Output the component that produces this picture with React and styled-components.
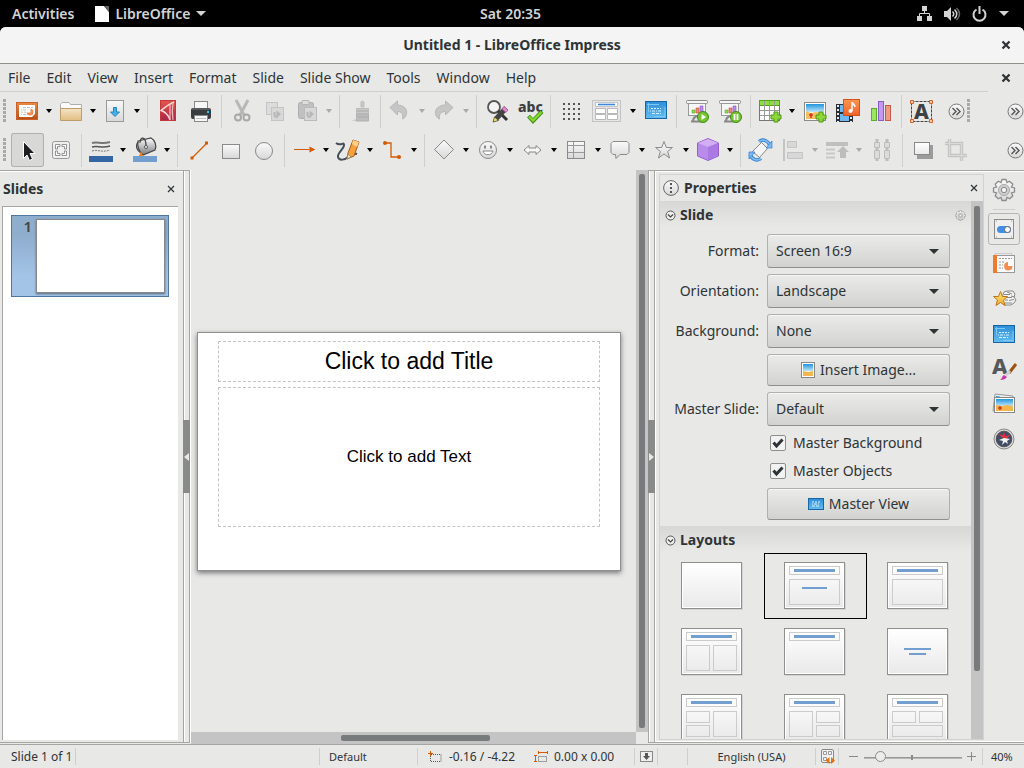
import React from 'react';
import styled, { createGlobalStyle, css } from 'styled-components';

const Global = createGlobalStyle`
  *, *::before, *::after { box-sizing: border-box; }
  body {
    margin: 0;
    background: #000;
    color: #2e3436;
    font: 14px/20px "Noto Sans", "Open Sans", sans-serif;
  }
  button, select, input { font: inherit; color: inherit; margin: 0; }
`;

/* ---------- frame ---------- */

const Screen = styled.div`
  display: flex;
  flex-direction: column;
  height: 100vh;
  min-height: 480px;
  overflow: hidden;
`;

const TopBar = styled.header`
  display: grid;
  grid-template-columns: 1fr auto 1fr;
  align-items: center;
  height: 27px;
  padding: 0 15px 0 12px;
  color: #d3d3d3;
  font-weight: 600;
`;

const TopGroup = styled.div`
  display: flex;
  align-items: center;
  gap: ${(p) => p.$gap}px;
  justify-content: ${(p) => (p.$end ? 'flex-end' : 'flex-start')};
`;

const TopButton = styled.button`
  display: flex;
  align-items: center;
  gap: 6px;
  padding: 0;
  border: 0;
  background: none;
`;

const Window = styled.div`
  display: flex;
  flex: 1;
  flex-direction: column;
  min-height: 0;
  background: #e8e8e7;
  border-radius: 6px 6px 0 0;
`;

const TitleBar = styled.div`
  display: grid;
  grid-template-columns: 1fr auto 1fr;
  align-items: center;
  height: 37px;
  padding: 0 12px;
  background: #f4f4f4;
  border-bottom: 1px solid #8f908c;
  border-radius: 6px 6px 0 0;
`;

const Title = styled.h1`
  grid-column: 2;
  margin: 0;
  font-size: 14px;
  font-weight: 700;
`;

const CloseButton = styled.button`
  display: flex;
  align-items: center;
  justify-content: center;
  justify-self: end;
  width: 12px;
  height: 20px;
  margin-left: auto;
  padding: 0;
  border: 0;
  background: none;
`;

const MenuBar = styled.nav`
  display: flex;
  align-items: center;
  gap: 16px;
  height: 27px;
  padding: 0 12px 0 8px;
`;

const MenuItem = styled.button`
  padding: 0;
  border: 0;
  background: none;
`;

/* ---------- toolbars ---------- */

const Toolbar = styled.div`
  display: flex;
  align-items: center;
  height: 39px;
  padding: 0 0 1px 3px;
`;

const ToolbarLine = styled.div`
  height: 1px;
  margin-right: 36px;
  background: #cfcfce;
`;

const Grip = styled.span`
  width: 3px;
  height: 24px;
  margin-right: ${(p) => p.$gap || 0}px;
  background: repeating-linear-gradient(#a9a9a8 0 3px, transparent 3px 4px);
`;

const ToolButton = styled.button`
  display: flex;
  align-items: center;
  flex: none;
  width: ${(p) => (p.$wide ? 41 : 33)}px;
  height: 34px;
  padding: 0 4px;
  border: 0;
  border-radius: 3px;
  background: none;
  ${(p) =>
    p.$active &&
    css`
      background: #d8d8d7;
      box-shadow: inset 0 0 0 1px #b0b0ae;
    `}
`;

const DropButton = styled.button`
  display: flex;
  align-items: center;
  flex: none;
  width: 11px;
  height: 34px;
  padding: 0 2px;
  border: 0;
  background: none;
`;

const Separator = styled.span`
  flex: none;
  width: 8px;
  height: 33px;
  background: linear-gradient(#cfcfce, #cfcfce) 4px 0 / 1px 100% no-repeat;
`;

const MoreButton = styled.button`
  display: flex;
  padding: 0;
  margin-left: ${(p) => (p.$end ? 'auto' : '10px')};
  margin-right: ${(p) => (p.$end ? 0 : '2px')};
  border: 0;
  background: none;
`;

/* ---------- workspace ---------- */

const Workspace = styled.main`
  display: flex;
  flex: 1;
  min-height: 0;
`;

const SlidePane = styled.aside`
  display: flex;
  flex: none;
  flex-direction: column;
  width: 183px;
  border-top: 1px solid #a5a6a3;
  border-bottom: 1px solid #a5a6a3;
  box-shadow: inset 0 1px #fff;
  margin-bottom: 1px;
`;

const PaneHeader = styled.div`
  display: flex;
  align-items: center;
  height: 35px;
  padding: 0 6px 0 3px;
`;

const PaneTitle = styled.h2`
  margin: 0;
  font-size: 14px;
  font-weight: 700;
`;

const SlideList = styled.div`
  flex: 1;
  margin: 0 5px 2px 2px;
  padding: 8px 9px 8px 8px;
  border-left: 1px solid #a5a6a3;
  border-top: 1px solid #a5a6a3;
  background: #fff;
`;

const SlideItem = styled.button`
  display: flex;
  align-items: flex-start;
  gap: 4px;
  width: 100%;
  height: 82px;
  padding: 3px;
  border: 1px solid #52779f;
  background: linear-gradient(#8fadcd 25%, #a3c4e6 75%);
  font-size: 15px;
  line-height: 14px;
  font-weight: 600;
`;

const SlideNumber = styled.span`
  flex: 1;
  text-align: right;
  color: #444;
`;

const SlideThumb = styled.span`
  width: 129px;
  height: 74px;
  border: 1px solid #888;
  background: #fff;
  box-shadow: 0 1px 2px #55667a;
`;

const Splitter = styled.div`
  display: flex;
  flex: none;
  align-items: center;
  width: 7px;
  border: 1px solid #a5a6a3;
  box-shadow: inset 1px 0 #fff, 1px 0 #fff;
  margin-bottom: 1px;
`;

const SplitHandle = styled.button`
  display: flex;
  flex: none;
  align-items: center;
  justify-content: center;
  width: 7px;
  height: 73px;
  margin: 0 -1px;
  padding: 0;
  border: 0;
  background: #888b8a;
`;

const Editor = styled.section`
  display: flex;
  flex: 1;
  min-width: 0;
  padding-left: 1px;
`;

const CanvasColumn = styled.div`
  display: flex;
  flex: 1;
  flex-direction: column;
  min-width: 0;
`;

const Canvas = styled.div`
  display: flex;
  flex: 1;
  align-items: center;
  justify-content: center;
  min-height: 0;
  padding: 0 9px 0 0;
  overflow: hidden;
`;

const Page = styled.article`
  display: flex;
  flex: none;
  flex-direction: column;
  gap: 5px;
  width: 424px;
  height: 239px;
  padding: 8px 20px;
  border: 1px solid #8f9092;
  background: #fff;
  box-shadow: 0 2px 5px #777;
`;

const Placeholder = styled.div`
  display: flex;
  align-items: center;
  justify-content: center;
  height: ${(p) => p.$height}px;
  border: 1px dashed #c4c4c4;
  color: #000;
  font-family: "Liberation Sans", Arial, sans-serif;
  font-size: ${(p) => p.$size}px;
`;

const VScroll = styled.div`
  flex: none;
  width: 12px;
  margin-bottom: ${(p) => p.$bottom || 0}px;
  padding: ${(p) => p.$pad} 3px;
  background: #c3c4c3;
`;

const HScroll = styled.div`
  display: flex;
  justify-content: center;
  flex: none;
  height: 12px;
  padding: 3px 0 3px 4px;
  background: #c3c4c3;
`;

const ScrollThumb = styled.div`
  width: ${(p) => p.$width || '100%'};
  height: ${(p) => p.$height || '100%'};
  border-radius: 2px;
  background: #777b7b;
`;

/* ---------- sidebar ---------- */

const Sidebar = styled.aside`
  display: flex;
  flex: none;
  width: 369px;
  padding: 3px 0 2px 4px;
  border-top: 1px solid #a5a6a3;
  border-bottom: 1px solid #a5a6a3;
  box-shadow: inset 0 1px #fff, inset 0 -1px #fff;
  margin-bottom: 1px;
`;

const Deck = styled.div`
  display: flex;
  flex: 1;
  flex-direction: column;
  min-width: 0;
  border: 1px solid #d2d3d1;
`;

const DeckHeader = styled.div`
  display: flex;
  align-items: center;
  gap: 5px;
  height: 26px;
  padding: 0 3px;
`;

const DeckBody = styled.div`
  display: flex;
  flex: 1;
  min-height: 0;
`;

const DeckContent = styled.div`
  flex: 1;
  min-width: 0;
  overflow: hidden;
`;

const SectionHeader = styled.div`
  display: flex;
  align-items: center;
  gap: 4px;
  height: 26px;
  padding: 2px 5px 0;
  background: linear-gradient(#d7d7d6, #e8e8e7);
`;

const IconButton = styled.button`
  display: flex;
  padding: 0;
  border: 0;
  background: none;
  margin-left: ${(p) => (p.$end ? 'auto' : 0)};
`;

const Form = styled.form`
  display: grid;
  grid-template-columns: 1fr 183px;
  align-items: center;
  gap: 6px 8px;
  padding: 7px 21px 6px 0;
`;

const Label = styled.label`
  text-align: right;
`;

const raised = css`
  border: 1px solid #b0b1ae;
  border-bottom-color: #8f908e;
  border-radius: 3px;
  background: linear-gradient(#ebebea, #d2d2d1);
  box-shadow: inset 0 1px #f6f6f6;
`;

const SelectBox = styled.div`
  display: grid;
  align-items: center;
  height: 34px;
  ${raised}
  > * { grid-area: 1 / 1; }
  > svg { justify-self: end; margin-right: 10px; pointer-events: none; }
`;

const Select = styled.select`
  width: 100%;
  height: 100%;
  padding: 0 28px 0 8px;
  border: 0;
  background: none;
  appearance: none;
`;

const PushButton = styled.button`
  grid-column: 2;
  display: flex;
  align-items: center;
  justify-content: center;
  gap: 5px;
  height: 32px;
  ${raised}
`;

const CheckGroup = styled.div`
  grid-column: 2;
  display: grid;
  gap: 6px;
  padding-left: 3px;
`;

const CheckLabel = styled.label`
  display: flex;
  align-items: center;
  gap: 7px;
  height: 22px;
`;

const checkMark =
  "url(\"data:image/svg+xml,%3Csvg xmlns='http://www.w3.org/2000/svg' viewBox='0 0 14 14'%3E%3Cpath d='M2.500 6.500L5.500 10L11.500 3.500' fill='none' stroke='%232e3436' stroke-width='3'/%3E%3C/svg%3E\")";

const Check = styled.input`
  width: 16px;
  height: 16px;
  border: 1px solid #8f908e;
  border-radius: 2px;
  background: ${checkMark} center / 14px no-repeat, #f2f2f2;
  appearance: none;
`;

const LayoutGrid = styled.div`
  display: grid;
  grid-template-columns: repeat(3, 1fr);
  grid-auto-rows: 66px;
  padding: 1px 1px 0;
`;

const LayoutCell = styled.button`
  display: flex;
  align-items: center;
  justify-content: center;
  padding: 0 2px 1px 0;
  border: 1px solid ${(p) => (p.$selected ? '#000' : 'transparent')};
  background: none;
`;

const TabBar = styled.nav`
  display: flex;
  flex: none;
  flex-direction: column;
  align-items: center;
  width: 40px;
  gap: 3px;
`;

const TabButton = styled.button`
  display: flex;
  align-items: center;
  justify-content: center;
  width: 32px;
  height: 32px;
  padding: 0;
  border: 1px solid ${(p) => (p.$active ? '#b5b6b4' : 'transparent')};
  border-radius: 3px;
  background: none;
`;

const TabRule = styled.span`
  width: 22px;
  height: 1px;
  background: #cfcfce;
`;

/* ---------- status bar ---------- */

const StatusBar = styled.footer`
  display: flex;
  align-items: center;
  height: 24px;
  border-top: 1px solid #a5a6a3;
  font-size: 11px;
`;

const StatusCell = styled.div`
  display: flex;
  align-items: center;
  flex: ${(p) => (p.$grow ? '1' : 'none')};
  width: ${(p) => p.$width}px;
  height: 17px;
  justify-content: ${(p) => (p.$center ? 'center' : 'flex-start')};
  gap: 5px;
  padding-left: ${(p) => p.$pad || 0}px;
  border-right: ${(p) => (p.$last ? '0' : '1px solid #cfcfce')};
  white-space: nowrap;
`;

const StatusValue = styled.span`
  width: ${(p) => p.$width || 'auto'};
  font-size: 12px;
`;

const ZoomStep = styled.button`
  display: flex;
  padding: 0;
  border: 0;
  background: none;
`;

const ZoomSlider = styled.input`
  width: 98px;
  height: 16px;
  appearance: none;
  background:
    linear-gradient(#8b8c8a, #8b8c8a) 47px 6px / 2px 5px no-repeat,
    linear-gradient(#979896, #979896) 0 8px / 100% 1px no-repeat,
    linear-gradient(#b9bab8, #b9bab8) 0 9px / 100% 1px no-repeat;
  &::-webkit-slider-thumb {
    appearance: none;
    width: 11px;
    height: 11px;
    border: 1px solid #8b8c8a;
    border-radius: 50%;
    background: #ececeb;
  }
`;

/* ---------- icons ---------- */

const Svg = styled.svg`
  display: block;
  flex: none;
  overflow: visible;
`;

const Icon = ({ w = 24, h = 24, children }) => (
  <Svg width={w} height={h} viewBox={`0 0 ${w} ${h}`} fill="none" aria-hidden="true">
    {children}
  </Svg>
);

const Gradient = ({ id, from, to }) => (
  <linearGradient id={id} x1="0" y1="0" x2="0" y2="1">
    <stop offset="0" stopColor={from} />
    <stop offset="1" stopColor={to} />
  </linearGradient>
);

const HiddenSvg = styled.svg`
  position: absolute;
`;

const SharedDefs = () => (
  <HiddenSvg width="0" height="0" aria-hidden="true">
    <defs>
      <Gradient id="grey" from="#fafafa" to="#d8d8d8" />
      <Gradient id="orange" from="#ec8a45" to="#b84d12" />
      <Gradient id="blue" from="#2d8ed8" to="#63bdf0" />
      <Gradient id="sky" from="#2196dd" to="#bfe6fa" />
      <Gradient id="paper" from="#ffffff" to="#e9e9e9" />
      <Gradient id="wood" from="#f4e3c4" to="#e2bd83" />
      <Gradient id="red" from="#e5564a" to="#a52848" />
      <Gradient id="metal" from="#ffffff" to="#777b80" />
      <Gradient id="gold" from="#ffe77a" to="#f3a92a" />
      <Gradient id="film" from="#ff9450" to="#f1602a" />
    </defs>
  </HiddenSvg>
);

const Arrow = ({ color = '#000', w = 6 }) => (
  <Icon w={w} h={w === 6 ? 4 : 5}>
    <path d={w === 6 ? 'M0 0h6L3 4z' : 'M0 0h10L5 5z'} fill={color} />
  </Icon>
);

const Cross = ({ bold }) =>
  bold ? (
    <Icon w={8} h={8}>
      <path d="M.5 .5l7 7M7.500 .5l-7 7" stroke="#2e3436" strokeWidth="2.300" />
    </Icon>
  ) : (
    <Icon w={6} h={6}>
      <path d="M0 0l6 6M6 0L0 6" stroke="#2e3436" strokeWidth="1.200" />
    </Icon>
  );

const More = () => (
  <Icon w={17} h={17}>
    <circle cx="8.500" cy="8.500" r="7.500" fill="url(#grey)" stroke="#777" />
    <path d="M4.500 5l3.500 3.500L4.500 12M8.500 5L12 8.500 8.500 12" stroke="#555" strokeWidth="1.400" />
  </Icon>
);

const SmallPlus = ({ x, y }) => (
  <path
    d={`M${x + 3} ${y}h4v3h3v4h-3v3h-4v-3h-3v-4h3z`}
    fill="#8fd63a"
    stroke="#4b9a12"
    strokeWidth="1"
  />
);

const Bars = ({ children }) => (
  <>
    <rect x="2.500" y="1.500" width="21" height="3" rx="1" fill="#f5f5f5" stroke="#888" />
    <rect x="4.500" y="4.500" width="17" height="12" fill="#f6f6f6" stroke="#999" />
    <path d="M8 14V11h3v3z" fill="#8bdc52" stroke="#57ac25" strokeWidth=".6" />
    <path d="M12 14V9h3v5z" fill="#ee8877" stroke="#c44b3a" strokeWidth=".6" />
    <path d="M16 14V7h3v7z" fill="#b98bea" stroke="#8654c0" strokeWidth=".6" />
    <path d="M9 22c0-4 2-4 4-5M7 22.500h10" stroke="#888" strokeWidth="2" />
    {children}
  </>
);

const A = {
  impress: (
    <>
      <rect x="1.500" y="3.500" width="21" height="17" fill="url(#orange)" stroke="#c9622a" />
      <path d="M4 6h16v9l-3 3H4z" fill="#fff" />
      <path d="M8 8.500h10" stroke="#c4c4c4" strokeDasharray="3 1" />
      <path d="M6 11h5M6 15.500h5" stroke="#c4c4c4" strokeDasharray="1 1 3 1" />
      <path d="M6 13.200h5" stroke="#c4c4c4" strokeDasharray="2 1" />
      <path d="M15.500 9.500a3.500 3.500 0 1 1-4 4h4z" fill="#f28d52" />
    </>
  ),
  folder: (
    <>
      <path d="M1.500 21V5.500L3 3.500h7l1.500 2h11V21z" fill="url(#paper)" stroke="#b0aea8" />
      <path d="M1.500 9.500h21v12h-21z" fill="url(#wood)" stroke="#bd9d6b" />
    </>
  ),
  save: (
    <>
      <rect x="3.500" y="1.500" width="17" height="21" fill="url(#grey)" stroke="#999" />
      <path d="M10.500 8.500h3v4.500h3L12 17.500 7.500 13h3z" fill="#43b1ea" stroke="#2384bb" />
    </>
  ),
  pdf: (
    <>
      <rect x="5.500" y="1.500" width="15" height="20" fill="url(#red)" stroke="#c3363c" />
      <path d="M19 3C12 6 8 10 6 11.500c4 1 8 5 9 9.500" stroke="#f9d9d9" strokeWidth="1.500" />
      <path d="M15 5v16M18 4c-1 6-1 11 0 17" stroke="#f3b9bd" strokeWidth="1.200" />
    </>
  ),
  print: (
    <>
      <rect x="6.500" y="2.500" width="13" height="8" fill="#f7f7f7" stroke="#888" />
      <rect x="3" y="9" width="20" height="11" rx="2" fill="#3a3d40" />
      <path d="M4 10h18" stroke="#777" />
      <rect x="19" y="12" width="2" height="2" fill="#27c5f5" />
      <rect x="6.500" y="16.500" width="13" height="6" fill="#f7f7f7" stroke="#888" />
      <path d="M8 19.500h10" stroke="#bbb" />
    </>
  ),
  cut: (
    <>
      <path d="M7 1l8 15M19 1l-8 15" stroke="#b8b8b8" strokeWidth="3" />
      <circle cx="9" cy="18.500" r="3" stroke="#a9a9a9" strokeWidth="2" />
      <circle cx="17.500" cy="18.500" r="3" stroke="#a9a9a9" strokeWidth="2" />
    </>
  ),
  copy: (
    <>
      <rect x="4.500" y="3.500" width="11" height="12" fill="#dcdcdc" stroke="#c4c4c4" />
      <rect x="9.500" y="8.500" width="12" height="13" fill="#d8d8d8" stroke="#c4c4c4" />
      <path d="M12.500 13v3c0 2 1 2 3 2" stroke="#b6b6b6" strokeWidth="2" />
      <path d="M14.500 11.500l4.500 3.500-4.500 4z" fill="#b6b6b6" />
    </>
  ),
  paste: (
    <>
      <rect x="3.500" y="3.500" width="15" height="16" rx="2" fill="#c0c0c0" stroke="#aeaeae" />
      <rect x="7" y="1.500" width="7" height="4" rx="1" fill="#ddd" stroke="#b5b5b5" />
      <rect x="9.500" y="8.500" width="12" height="13" fill="#d8d8d8" stroke="#bbb" />
      <path d="M12.500 13v3c0 2 1 2 3 2" stroke="#b6b6b6" strokeWidth="2" />
      <path d="M14.500 11.500l4.500 3.500-4.500 4z" fill="#b6b6b6" />
    </>
  ),
  brush: (
    <>
      <path d="M4 22l5-2h12v2z" fill="#cfcfcf" />
      <path d="M14 8V3a2 2 0 0 1 3 0v5z" fill="#c9c9c9" stroke="#bbb" />
      <path d="M9.500 9.500h12v5h-12z" fill="#c8c8c8" stroke="#bbb" />
      <path d="M9.500 15h12v7H9c1-2 .5-4 .5-7z" fill="#bdbdbd" stroke="#b0b0b0" />
      <path d="M10 12h11M11 18h10" stroke="#a9a9a9" />
    </>
  ),
  undo: <path d="M2 8.500L9.500 2v4c6 0 10 4 9 8.500-.5 3-2 4.500-4 5.500 1-5-1-7.500-5-7.500V16z" fill="#c6c6c6" stroke="#b7b7b7" />,
  redo: <path d="M21 8.500L13.500 2v4c-6 0-11 4-10 8.500.5 3 2 4.500 4 5.500-1-5 2-7.500 6-7.500V16z" fill="#c6c6c6" stroke="#b7b7b7" />,
  find: (
    <>
      <circle cx="10" cy="8" r="6" fill="#f3f3f3" stroke="#555" strokeWidth="1.800" />
      <path d="M14 12l9 9" stroke="#333" strokeWidth="3" />
      <path d="M22 9L12 20" stroke="#444" strokeWidth="5" />
      <path d="M20 7.500l4 3.500-2 2.500-4-3.500z" fill="#e58cd0" stroke="#a0508d" strokeWidth=".7" />
      <path d="M9 23l1.500-5 4 3.500z" fill="#ffe25c" stroke="#444" strokeWidth=".8" />
    </>
  ),
  spell: (
    <>
      <text x="1" y="13" fill="#3d4043" fontFamily="Noto Sans, sans-serif" fontSize="14" fontWeight="800">abc</text>
      <path d="M11.500 17l4.500 5L25 12.500" stroke="#3f8f10" strokeWidth="4" />
      <path d="M12 17.500l4 4L24.500 13" stroke="#85d732" strokeWidth="2.300" />
    </>
  ),
  dots: <path d="M5 5h18M5 10h18M5 15h18M5 20h18" stroke="#555" strokeWidth="2" strokeDasharray="2 3" />,
  tableLayout: (
    <>
      <rect x="1.500" y="1.500" width="28" height="21" fill="#e6e6e6" stroke="#c4c4c4" />
      <rect x="4.500" y="3.500" width="22" height="4" fill="#fff" stroke="#bbb" strokeWidth=".8" />
      <path d="M7 5.500h17" stroke="#3a87dc" strokeWidth="1.600" />
      <path d="M4.500 9.500h10v5h-10zM16.500 9.500h10v5h-10zM4.500 15.500h10v5h-10zM16.500 15.500h10v5h-10z" fill="#fff" stroke="#aaa" strokeWidth=".8" />
    </>
  ),
  master: (
    <>
      <rect x="2.500" y="2.500" width="21" height="17" fill="url(#blue)" stroke="#1766a5" />
      <path d="M4 5.500h12M5.500 4v9M22 8v9.500H11" stroke="#7cc8f5" />
      <path d="M8 9.500h10" stroke="#d9f0ff" strokeDasharray="2 1" />
      <path d="M7 12h12" stroke="#d9f0ff" strokeDasharray="1 1 3 1" />
      <path d="M9 14.500h9" stroke="#d9f0ff" strokeDasharray="3 1" />
    </>
  ),
  play: (
    <Bars>
      <circle cx="19" cy="18" r="5.500" fill="#77c432" stroke="#3f8a12" />
      <path d="M17.500 15v6l4.500-3z" fill="#fff" />
    </Bars>
  ),
  pause: (
    <Bars>
      <circle cx="19" cy="18" r="5.500" fill="#77c432" stroke="#3f8a12" />
      <path d="M17.500 15v6M20.500 15v6" stroke="#fff" strokeWidth="1.800" />
    </Bars>
  ),
  table: (
    <>
      <rect x="1.500" y="1.500" width="20" height="20" fill="#fdfdfd" stroke="#777" />
      <rect x="1.500" y="1.500" width="20" height="5" fill="#8fdc46" stroke="#52a31b" />
      <path d="M6.500 2v19M11.500 2v19M16.500 2v19M2 11.500h19M2 16.500h19" stroke="#999" />
      <SmallPlus x={13} y={13} />
    </>
  ),
  image: (
    <>
      <rect x="2.500" y="3.500" width="21" height="18" fill="#fff" stroke="#8b8b8b" />
      <rect x="4" y="5" width="18" height="8" fill="url(#sky)" />
      <path d="M4 12l5 2 5-1 8 1v6H4z" fill="#f4bf62" />
      <path d="M7 16h4M9 14v5" stroke="#d43a1d" strokeWidth="1.600" />
      <SmallPlus x={14} y={13} />
    </>
  ),
  media: (
    <>
      <rect x="1" y="5" width="17" height="18" fill="#2b2f33" />
      <rect x="5" y="6" width="9" height="7" fill="#6fb7ef" />
      <rect x="5" y="15" width="9" height="7" fill="#6fb7ef" />
      <path d="M3 6v17M16 6v17" stroke="#fff" strokeWidth="1.800" strokeDasharray="2 2" />
      <rect x="8.500" y=".5" width="16" height="16" fill="url(#film)" stroke="#d2521a" />
      <path d="M17 12V3c0 2 3 2 3 5" stroke="#fff" strokeWidth="1.500" />
      <circle cx="15.500" cy="12" r="2" fill="#fff" />
    </>
  ),
  chart: (
    <>
      <rect x="3.500" y="9.500" width="5" height="12" fill="#9be564" stroke="#5cab2a" />
      <rect x="10.500" y="2.500" width="5" height="19" fill="#c49af0" stroke="#8d5bc9" />
      <rect x="17.500" y="6.500" width="5" height="15" fill="#ef9a86" stroke="#c45b49" />
    </>
  ),
  textBox: (
    <>
      <rect x="2.500" y="2.500" width="20" height="20" stroke="#444" strokeDasharray="3 1" />
      <path d="M1.500 1.500h3v3h-3zM20.500 1.500h3v3h-3zM1.500 20.500h3v3h-3zM20.500 20.500h3v3h-3z" fill="#ffc9a3" stroke="#d8652a" />
      <text x="12.500" y="20" textAnchor="middle" fill="#3f4245" fontFamily="Noto Sans, sans-serif" fontSize="21" fontWeight="800">A</text>
    </>
  ),
  pointer: (
    <path d="M8.500 3.500v17l3.500-3.500 2.500 5.500 3-1.500-2.500-5.500h5z" fill="#1b1d1f" stroke="#fff" />
  ),
  group: (
    <>
      <rect x="4.500" y="3.500" width="17" height="17" rx="2" fill="#efefef" stroke="#999" />
      <path d="M7.500 11V6.500H12v2H9.500V11zM14 6.500h4.500V11h-2V8.500H14zM7.500 13v4.500H12v-2H9.500V13zM18.500 13v4.500H14v-2h2.500V13z" fill="#fff" stroke="#888" strokeWidth=".9" />
    </>
  ),
  lineColor: (
    <>
      <path d="M3 5c6-2 9 2 18-1" stroke="#777" strokeWidth="2" />
      <path d="M3 9c6-2 9 2 18-1" stroke="#555" strokeWidth="1.500" />
      <path d="M3 13c6-2 9 2 18-1" stroke="#777" strokeDasharray="2 1" />
      <rect x="0" y="18" width="24" height="6" fill="#3465a4" />
    </>
  ),
  fillColor: (
    <>
      <path d="M5 3l13-3c4 2 6 8 4 12L10 17c-4-3-6-9-5-14z" fill="url(#metal)" stroke="#444" strokeWidth="1.200" />
      <path d="M7 5c0-7 6-7 6 3M5 4c-3 4-1 9 3 11" stroke="#444" strokeWidth="1.200" />
      <circle cx="13" cy="9" r="1.500" fill="#fff" stroke="#555" />
      <path d="M6 18l2-5 2 5z" fill="#ef7d1e" />
      <rect x="0" y="18" width="24" height="6" fill="#729fcf" />
    </>
  ),
  line: (
    <>
      <path d="M7 20L22 5" stroke="#d45a00" strokeWidth="1.300" />
      <path d="M5.500 18.500h3v3h-3zM20 3.500h3v3h-3z" fill="#d45a00" />
    </>
  ),
  rect: <rect x="4.500" y="6.500" width="17" height="14" fill="url(#grey)" stroke="#8a8a8a" />,
  circle: <circle cx="13" cy="13" r="8.500" fill="url(#grey)" stroke="#8a8a8a" />,
  arrow: <path d="M2 11.500h15M18 9.500v4l4-2z" stroke="#d45a00" strokeWidth="1.200" fill="#d45a00" />,
  curve: (
    <>
      <path d="M0 5c5 4 8-2 8 2S1 15 2 19s7 3 10 0 6-4 9-3" stroke="#444d58" strokeWidth="2" />
      <path d="M17 2l6 2-5 14-7 3 1-6z" fill="#f6a13c" stroke="#a85d14" />
      <path d="M17 2l6 2-2 5-5-3z" fill="#ffcf8a" />
      <path d="M11 21l1-5 3 3z" fill="#f6dfb5" stroke="#777" strokeWidth=".6" />
    </>
  ),
  connector: (
    <>
      <path d="M5 5h6v14h8" stroke="#d45a00" strokeWidth="1.300" />
      <circle cx="5" cy="5" r="2" fill="#d45a00" />
      <circle cx="19" cy="19" r="2" fill="#d45a00" />
    </>
  ),
  diamond: <path d="M12 2l9.500 9.500L12 21l-9.500-9.500z" fill="url(#grey)" stroke="#8a8a8a" />,
  smiley: (
    <>
      <circle cx="12" cy="12" r="8.500" fill="url(#grey)" stroke="#8a8a8a" />
      <path d="M9 7.500v3M15 7.500v3" stroke="#888" strokeWidth="2" />
      <path d="M7 13h10c-1 5-9 5-10 0z" fill="#fff" stroke="#888" />
    </>
  ),
  doubleArrow: <path d="M4 12l5-4.500V10h7V7.500l5 4.500-5 4.500V14H9v2.500z" fill="#f7f7f7" stroke="#888" />,
  flow: (
    <>
      <rect x="3.500" y="3.500" width="17" height="17" fill="url(#grey)" stroke="#8a8a8a" />
      <path d="M9.500 4v16M4 7.500h16M4 14.500h16" stroke="#999" />
    </>
  ),
  callout: <path d="M5 3.500h14l2 2v9l-2 2h-7l-4 4-.500-4H5l-2-2v-9z" fill="url(#grey)" stroke="#8a8a8a" />,
  star: <path d="M12 3.500l2.300 6h6.200l-4.800 4 1.800 6.500L12 16l-5.500 4 1.800-6.500-4.800-4h6.200z" fill="url(#grey)" stroke="#8a8a8a" />,
  cube: (
    <>
      <path d="M1.500 5L12 .5 22.500 5v13L12 22.500 1.500 18z" fill="#b98bea" stroke="#9560cf" />
      <path d="M2 5L12 1l10 4-10 4z" fill="#d2aef5" />
      <path d="M12 9l10-4v13l-10 4z" fill="#ab78e4" />
    </>
  ),
  rotate: (
    <>
      <path d="M13.500 4.500l6 6-8 9-7-6z" fill="#f5f5f5" stroke="#888" />
      <path d="M11 3.500c4-3 9-1 11 4M13 20.500c-4 3-9 1-11-4" stroke="#2b7ccb" strokeWidth="3.400" />
      <path d="M11 3.500c4-3 9-1 11 4M13 20.500c-4 3-9 1-11-4" stroke="#7fbcf6" strokeWidth="1.800" />
      <path d="M24 3v7h-6zM1 21v-7h6z" fill="#7fbcf6" stroke="#2b7ccb" strokeWidth=".7" />
    </>
  ),
  align: (
    <>
      <path d="M3 1v22" stroke="#c4c4c4" strokeWidth="2" />
      <path d="M6.500 3.500h9v6h-9zM6.500 14.500h15v6h-15z" fill="#d8d8d8" stroke="#c4c4c4" />
    </>
  ),
  arrange: (
    <>
      <path d="M1 6h22" stroke="#c0c0c0" strokeWidth="4" />
      <path d="M1 11.500h9M1 15.500h9M1 19.500h9" stroke="#c8c8c8" strokeWidth="2" />
      <path d="M15 20v-6h-3l6-6 6 6h-3v6z" fill="#bdbdbd" />
    </>
  ),
  distribute: (
    <>
      <path d="M8 1v22M18 1v22" stroke="#bdbdbd" strokeWidth="3" strokeDasharray="3 1" />
      <path d="M5.500 4.500h5v5h-5zM5.500 12.500h5v8h-5zM15.500 4.500h5v5h-5zM15.500 12.500h5v8h-5z" fill="#dcdcdc" stroke="#bdbdbd" />
    </>
  ),
  shadow: (
    <>
      <rect x="7" y="7" width="16" height="14" fill="#9b9b9b" />
      <rect x="4.500" y="4.500" width="15" height="12" fill="url(#paper)" stroke="#888" />
    </>
  ),
  crop: (
    <>
      <path d="M6.500 1v16.500H24M2 5.500h16.500V23" stroke="#c4c4c4" strokeWidth="3.400" />
      <path d="M6.500 1v16.500H24M2 5.500h16.500V23" stroke="#dadada" strokeWidth="1.200" />
    </>
  ),
};

const GearIcon = ({ size = 24 }) => (
  <Svg width={size} height={size} viewBox="0 0 24 24" fill="none" aria-hidden="true">
    <path
      d="M10 1.500h4l1 3 2.500-1.300 3.300 3L19.500 9l3 1v4l-3 1 1.300 2.800-3 3L15 19.500l-1 3h-4l-1-3-2.800 1.300-3-3L4.500 15l-3-1v-4l3-1-1.300-2.800 3-3L9 4.500z"
      fill="url(#grey)"
      stroke="#8d8d8d"
      strokeWidth="1.300"
    />
    <circle cx="12" cy="12" r="5.500" fill="#cfcfcf" stroke="#a8a8a8" />
    <circle cx="12" cy="12" r="2.700" fill="#f3f3f3" stroke="#888" />
  </Svg>
);

const tabs = [
  {
    name: 'Properties',
    active: true,
    art: (
      <>
        <rect x="2.500" y="2.500" width="19" height="19" fill="#efefef" stroke="#8b8b8b" />
        <path d="M4 4h1M19 4h1M4 20h1M19 20h1" stroke="#999" />
        <rect x="5" y="9" width="14" height="7" rx="3.500" fill="#3f8fe6" />
        <circle cx="15.500" cy="12.500" r="3" fill="#fff" stroke="#666" />
      </>
    ),
  },
  {
    name: 'Slide Transition',
    art: (
      <>
        <path d="M3 3.500V1.500h17v2" stroke="#ccc" />
        <rect x="1.500" y="3.500" width="21" height="17" fill="#fafafa" stroke="#999" />
        <rect x="1" y="3" width="4" height="18" fill="#f07a2c" />
        <path d="M7 6.500h13M7 10h5M7 13h4M7 16h4" stroke="#999" strokeDasharray="2 1" />
        <path d="M16 10v4h4.500A4.200 4.200 0 1 1 16 10z" fill="#f28d52" />
      </>
    ),
  },
  {
    name: 'Animation',
    art: (
      <>
        <path d="M12 5l3-1h6l2 3-1 3 2 3-2 3-3 2h-7l-3-5z" fill="#f3f3f3" stroke="#888" />
        <path d="M12 7.500h6M19 9l4 1M12 10.500h8M13 13h3M17 13.500l5-1M13 16h7M15 5l5 2" stroke="#888" />
        <path d="M8.500 4.500l2 5h5l-4 3.500 1.500 5.500-4.500-3-4.500 3L5.500 13l-4-3.500h5z" fill="url(#gold)" stroke="#b87a18" />
      </>
    ),
  },
  {
    name: 'Master Slides',
    art: (
      <>
        <rect x="1.500" y="3.500" width="21" height="17" fill="url(#blue)" stroke="#1766a5" />
        <path d="M3 6.500h10M4.500 5v8M21 9v9.500H11" stroke="#7cc8f5" />
        <path d="M7 10.500h10" stroke="#d9f0ff" strokeDasharray="2 1" />
        <path d="M6 13h12" stroke="#d9f0ff" strokeDasharray="1 1 3 1" />
        <path d="M7 15.500h9" stroke="#d9f0ff" strokeDasharray="3 1" />
      </>
    ),
  },
  {
    name: 'Styles',
    art: (
      <>
        <text x="0" y="17" fill="#55585a" fontFamily="Noto Sans, sans-serif" fontSize="22" fontWeight="800">A</text>
        <path d="M24 7l-7 9" stroke="#9c5212" strokeWidth="3" />
        <path d="M18 14l-4 4" stroke="#ccc" strokeWidth="3" />
        <path d="M8 23c2-1 2-4 4-5l3 2c-1 2-4 3-7 3z" fill="#c936a4" />
      </>
    ),
  },
  {
    name: 'Gallery',
    art: (
      <>
        <path d="M1 19L3 2l18 2-1 16z" fill="#eee" stroke="#999" />
        <path d="M4 4l4 .5-1 3-3-.5z" fill="#2196dd" />
        <rect x="2.500" y="5.500" width="20" height="15" fill="#fff" stroke="#888" />
        <rect x="4" y="7" width="17" height="7" fill="url(#sky)" />
        <path d="M4 13l6 1 5-1 6 1v5H4z" fill="#f4b64e" />
        <path d="M6 16h4M8 14v4" stroke="#d43a1d" strokeWidth="1.500" />
      </>
    ),
  },
  {
    name: 'Navigator',
    art: (
      <>
        <circle cx="12" cy="12" r="10" fill="#d9d9d9" stroke="#888" />
        <circle cx="12" cy="12" r="7.800" fill="#424c66" stroke="#555" />
        <path d="M12 12L6 7l5 1 1-3 1.500 4L18 8l-3 4z" fill="#d9343e" />
        <path d="M12 11l-5 2 4 1-1 4 3-3 3 2-1-3 3-2z" fill="#f3f3f3" />
      </>
    ),
  },
];

/* Toolbar rows: "|" is a separator; drop adds an arrow; off greys the arrow out. */
const standardTools = [
  ['impress', 'New', 'drop'], ['folder', 'Open', 'drop'], ['save', 'Save', 'drop'], '|',
  ['pdf', 'Export as PDF'], ['print', 'Print'], '|',
  ['cut', 'Cut'], ['copy', 'Copy'], ['paste', 'Paste', 'off'], '|',
  ['brush', 'Clone Formatting'], '|',
  ['undo', 'Undo', 'off'], ['redo', 'Redo', 'off'], '|',
  ['find', 'Find & Replace'], ['spell', 'Spelling'], '|',
  ['dots', 'Display Grid'], ['tableLayout', 'Slide Layout', 'drop', 'wide'], ['master', 'Master Slide'], '|',
  ['play', 'Start from First Slide'], ['pause', 'Start from Current Slide'], '|',
  ['table', 'Table', 'drop'], ['image', 'Image'], ['media', 'Audio or Video'], ['chart', 'Chart'], '|',
  ['textBox', 'Text Box'],
];

const drawingTools = [
  ['pointer', 'Select', '', 'active'], ['group', 'Zoom & Pan'], '|',
  ['lineColor', 'Line Color', 'drop'], ['fillColor', 'Area Color', 'drop'], '|',
  ['line', 'Line'], ['rect', 'Rectangle'], ['circle', 'Ellipse'], '|',
  ['arrow', 'Lines and Arrows', 'drop'], ['curve', 'Curve', 'drop'], ['connector', 'Connector', 'drop'], '|',
  ['diamond', 'Basic Shapes', 'drop'], ['smiley', 'Symbol Shapes', 'drop'], ['doubleArrow', 'Block Arrows', 'drop'],
  ['flow', 'Flowchart', 'drop'], ['callout', 'Callouts', 'drop'], ['star', 'Stars', 'drop'], ['cube', '3D Objects', 'drop'], '|',
  ['rotate', 'Rotate'], ['align', 'Align', 'off'], ['arrange', 'Arrange', 'off'], ['distribute', 'Distribute'], '|',
  ['shadow', 'Shadow'], ['crop', 'Crop'],
];

const Tools = ({ items }) =>
  items.map((item, i) => {
    if (item === '|') return <Separator key={i} />;
    const [art, name, drop, mode] = item;
    return (
      <React.Fragment key={i}>
        <ToolButton aria-label={name} $wide={mode === 'wide'} $active={mode === 'active'}>
          <Icon w={mode === 'wide' ? 32 : 24}>{A[art]}</Icon>
        </ToolButton>
        {drop && (
          <DropButton aria-label={`${name} options`}>
            <Arrow color={drop === 'off' ? '#aaa' : '#000'} />
          </DropButton>
        )}
      </React.Fragment>
    );
  });

/* Boxes are [x, y, width, height] inside a 61 x 47 page. */
const titleBox = [5, 4, 50, 8];
const layouts = [
  { name: 'Blank Slide', boxes: [], bars: [] },
  { name: 'Title Slide', boxes: [titleBox, [5, 17, 50, 25]], bars: [[10, 7, 41, 3], [18, 25, 25, 2]], selected: true },
  { name: 'Title, Content', boxes: [titleBox, [5, 17, 50, 25]], bars: [[10, 7, 41, 3]] },
  { name: 'Title and 2 Content', boxes: [titleBox, [5, 17, 23, 25], [32, 17, 23, 25]], bars: [[10, 7, 41, 3]] },
  { name: 'Title Only', boxes: [titleBox], bars: [[10, 7, 41, 3]] },
  { name: 'Centered Text', boxes: [], bars: [[17, 20, 27, 2], [22, 25, 17, 2]] },
  { name: 'Title, 2 Content and Content', boxes: [titleBox, [5, 17, 23, 11], [5, 31, 23, 11], [32, 17, 23, 25]], bars: [[10, 7, 41, 3]] },
  { name: 'Title, Content and 2 Content', boxes: [titleBox, [5, 17, 23, 25], [32, 17, 23, 11], [32, 31, 23, 11]], bars: [[10, 7, 41, 3]] },
  { name: 'Title, 2 Content over Content', boxes: [titleBox, [5, 17, 23, 11], [32, 17, 23, 11], [5, 31, 50, 11]], bars: [[10, 7, 41, 3]] },
];

const LayoutArt = ({ boxes, bars }) => (
  <Icon w={61} h={47}>
    <rect x="1" y="1" width="61" height="47" fill="#d4d4d3" />
    <rect x=".5" y=".5" width="60" height="46" fill="#fff" stroke="#8f908e" />
    <rect x="2" y="2" width="57" height="43" fill="url(#paper)" />
    {boxes.map(([x, y, w, h]) => (
      <rect key={`${x}-${y}`} x={x + 0.5} y={y + 0.5} width={w} height={h} stroke="#cbcbcb" />
    ))}
    {bars.map(([x, y, w, h]) => (
      <rect key={`${x}-${y}`} x={x} y={y} width={w} height={h} fill="#729fcf" />
    ))}
  </Icon>
);

const Expander = () => (
  <Icon w={11} h={11}>
    <circle cx="5.500" cy="5.500" r="4.500" fill="#eee" stroke="#555" />
    <path d="M3 4.500l2.500 2.500L8 4.500" stroke="#444" strokeWidth="1.200" />
  </Icon>
);

const Field = ({ id, label, value }) => (
  <>
    <Label htmlFor={id}>{label}</Label>
    <SelectBox>
      <Select id={id} defaultValue={value}>
        <option>{value}</option>
      </Select>
      <Arrow w={10} color="#2e3436" />
    </SelectBox>
  </>
);

const menus = ['File', 'Edit', 'View', 'Insert', 'Format', 'Slide', 'Slide Show', 'Tools', 'Window', 'Help'];

export default function App() {
  return (
    <Screen>
      <Global />
      <SharedDefs />

      <TopBar>
        <TopGroup $gap={21}>
          <TopButton>Activities</TopButton>
          <TopButton>
            <Icon w={14} h={16}>
              <path d="M0 0h9l5 6v10H0z" fill="#fff" />
              <path d="M9 0h5v6z" fill="#666" />
            </Icon>
            LibreOffice
            <Arrow w={10} color="#d3d3d3" />
          </TopButton>
        </TopGroup>
        <span>Sat 20:35</span>
        <TopGroup $gap={12} $end>
          <Icon w={15} h={15}>
            <path d="M5 0h5v5H5zM0 10h5v5H0zM10 10h5v5h-5z" fill="#d3d3d3" />
            <path d="M7.500 5v3M2.500 11V7.500h10V11" stroke="#d3d3d3" />
          </Icon>
          <Icon w={16} h={14}>
            <path d="M0 4h3l4-4v14l-4-4H0z" fill="#d3d3d3" />
            <path d="M8.500 4.500c1.500 1.500 1.500 3.500 0 5M10.500 2.500c3 3 3 6 0 9" stroke="#d3d3d3" strokeWidth="1.500" />
            <path d="M12.500 1c4 4 4 8 0 12" stroke="#666" strokeWidth="1.500" />
          </Icon>
          <Icon w={15} h={16}>
            <path d="M4.500 3.500a6 6 0 1 0 6 0M7.500 0v8" stroke="#d3d3d3" strokeWidth="2" />
          </Icon>
          <Arrow w={10} color="#d3d3d3" />
        </TopGroup>
      </TopBar>

      <Window>
        <TitleBar>
          <Title>Untitled 1 - LibreOffice Impress</Title>
          <CloseButton aria-label="Close window"><Cross bold /></CloseButton>
        </TitleBar>

        <MenuBar>
          {menus.map((m) => <MenuItem key={m}>{m}</MenuItem>)}
          <CloseButton aria-label="Close document"><Cross bold /></CloseButton>
        </MenuBar>

        <ToolbarLine />
        <Toolbar role="toolbar" aria-label="Standard">
          <Grip $gap={5} />
          <Tools items={standardTools} />
          <MoreButton aria-label="More standard tools"><More /></MoreButton>
          <Grip $gap={3} />
          <MoreButton $end aria-label="More toolbars"><More /></MoreButton>
        </Toolbar>
        <Toolbar role="toolbar" aria-label="Drawing">
          <Grip $gap={5} />
          <Tools items={drawingTools} />
          <MoreButton $end aria-label="More drawing tools"><More /></MoreButton>
        </Toolbar>

        <Workspace>
          <SlidePane>
            <PaneHeader>
              <PaneTitle>Slides</PaneTitle>
              <CloseButton aria-label="Close slides pane"><Cross /></CloseButton>
            </PaneHeader>
            <SlideList>
              <SlideItem aria-label="Slide 1">
                <SlideNumber>1</SlideNumber>
                <SlideThumb />
              </SlideItem>
            </SlideList>
          </SlidePane>
          <Splitter>
            <SplitHandle aria-label="Hide slides pane">
              <Icon w={5} h={8}><path d="M5 0v8L0 4z" fill="#e8e8e7" /></Icon>
            </SplitHandle>
          </Splitter>

          <Editor>
            <CanvasColumn>
              <Canvas>
                <Page>
                  <Placeholder $height={41} $size={23}>Click to add Title</Placeholder>
                  <Placeholder $height={140} $size={17}>Click to add Text</Placeholder>
                </Page>
              </Canvas>
              <HScroll><ScrollThumb $width="149px" /></HScroll>
            </CanvasColumn>
            <VScroll $pad="4px" $bottom={12}><ScrollThumb /></VScroll>
          </Editor>

          <Splitter>
            <SplitHandle aria-label="Hide sidebar">
              <Icon w={5} h={8}><path d="M0 0v8l5-4z" fill="#e8e8e7" /></Icon>
            </SplitHandle>
          </Splitter>
          <Sidebar>
            <Deck>
              <DeckHeader>
                <Icon w={16} h={16}>
                  <circle cx="8" cy="8" r="7.400" fill="url(#grey)" stroke="#666" />
                  <path d="M8 3v10" stroke="#555" strokeWidth="2" strokeDasharray="2 2" />
                </Icon>
                <PaneTitle>Properties</PaneTitle>
                <CloseButton aria-label="Close sidebar"><Cross /></CloseButton>
              </DeckHeader>
              <DeckBody>
                <DeckContent>
                  <SectionHeader>
                    <Expander />
                    <PaneTitle>Slide</PaneTitle>
                    <IconButton $end aria-label="Slide options"><GearIcon size={11} /></IconButton>
                  </SectionHeader>
                  <Form>
                    <Field id="format" label="Format:" value="Screen 16:9" />
                    <Field id="orientation" label="Orientation:" value="Landscape" />
                    <Field id="background" label="Background:" value="None" />
                    <PushButton type="button">
                      <Icon w={14} h={16}>
                        <rect x=".5" y=".5" width="13" height="15" fill="#fff" stroke="#888" />
                        <rect x="2" y="2" width="10" height="7" fill="url(#sky)" />
                        <path d="M2 9l5 1 5-1v5H2z" fill="#f4b64e" />
                      </Icon>
                      Insert Image...
                    </PushButton>
                    <Field id="master" label="Master Slide:" value="Default" />
                    <CheckGroup>
                      <CheckLabel><Check type="checkbox" defaultChecked />Master Background</CheckLabel>
                      <CheckLabel><Check type="checkbox" defaultChecked />Master Objects</CheckLabel>
                    </CheckGroup>
                    <PushButton type="button">
                      <Icon w={16} h={12}>
                        <rect x=".5" y=".5" width="15" height="11" fill="url(#blue)" stroke="#1766a5" />
                        <path d="M4 4h8" stroke="#d9f0ff" strokeDasharray="2 1" />
                        <path d="M4 6h8" stroke="#d9f0ff" strokeDasharray="1 1 3 1" />
                        <path d="M4 8h8" stroke="#d9f0ff" strokeDasharray="3 1" />
                      </Icon>
                      Master View
                    </PushButton>
                  </Form>
                  <SectionHeader>
                    <Expander />
                    <PaneTitle>Layouts</PaneTitle>
                  </SectionHeader>
                  <LayoutGrid>
                    {layouts.map((l) => (
                      <LayoutCell key={l.name} aria-label={l.name} $selected={l.selected}>
                        <LayoutArt {...l} />
                      </LayoutCell>
                    ))}
                  </LayoutGrid>
                </DeckContent>
                <VScroll $pad="5px"><ScrollThumb $height="88%" /></VScroll>
              </DeckBody>
            </Deck>
            <TabBar>
              <TabButton aria-label="Sidebar settings"><GearIcon /></TabButton>
              <TabRule />
              {tabs.map((t) => (
                <TabButton key={t.name} aria-label={t.name} $active={t.active}>
                  <Icon>{t.art}</Icon>
                </TabButton>
              ))}
            </TabBar>
          </Sidebar>
        </Workspace>

        <StatusBar>
          <StatusCell $width={76} $pad={11}><StatusValue>Slide 1 of 1</StatusValue></StatusCell>
          <StatusCell $grow />
          <StatusCell $width={98} $pad={9}>Default</StatusCell>
          <StatusCell $width={217} $pad={10}>
            <Icon w={16} h={12}>
              <path d="M3 3.500h10v7H2.500V5" stroke="#555" strokeDasharray="1 1" />
              <path d="M0 2.500h5M2.500 0v5" stroke="#d45a00" />
            </Icon>
            <StatusValue $width="80px">-0.16 / -4.22</StatusValue>
            <Icon w={15} h={12}>
              <path d="M4.500 5.500h8v5h-8z" stroke="#555" strokeDasharray="1 1" />
              <path d="M5 1.500h8M4.500 0v3M13.500 0v3M1.500 5v6M0 4.500h3M0 10.500h3" stroke="#d45a00" />
            </Icon>
            <StatusValue>0.00 x 0.00</StatusValue>
          </StatusCell>
          <StatusCell $width={23} $center>
            <Icon w={13} h={11}>
              <rect x=".5" y=".5" width="12" height="10" fill="#eee" stroke="#888" />
              <path d="M5 2h3v3h2L6.500 9 3 5h2z" fill="#555" />
            </Icon>
          </StatusCell>
          <StatusCell $width={30} />
          <StatusCell $width={128} $center>English (USA)</StatusCell>
          <StatusCell $width={23} $center>
            <Icon w={15} h={15}>
              <rect x="1.500" y=".5" width="12" height="13" rx="1.500" fill="#f2f2f2" stroke="#888" />
              <path d="M3.500 2.500h3v3h-3zM8.500 2.500h3v3h-3zM3.500 8.500h3v3h-3z" stroke="#999" />
              <path d="M9.500 8v7L5.500 11.500zM11 8v7l4-3.500z" fill="#e8730c" />
            </Icon>
          </StatusCell>
          <StatusCell $width={144} $pad={9}>
            <ZoomStep aria-label="Zoom out">
              <Icon w={11} h={11}><path d="M1 5.500h9" stroke="#888" /></Icon>
            </ZoomStep>
            <ZoomSlider type="range" aria-label="Zoom" min="0" max="100" defaultValue="13" />
            <ZoomStep aria-label="Zoom in">
              <Icon w={9} h={11}><path d="M0 5.500h9M4.500 1v9" stroke="#888" /></Icon>
            </ZoomStep>
          </StatusCell>
          <StatusCell $width={41} $pad={8} $last>40%</StatusCell>
        </StatusBar>
      </Window>
    </Screen>
  );
}
